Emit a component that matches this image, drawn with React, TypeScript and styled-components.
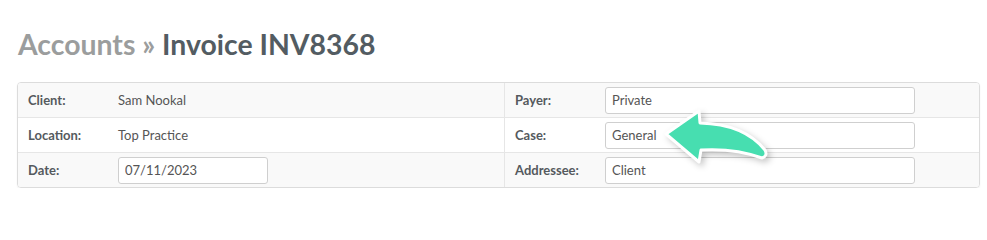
import * as React from "react"
import styled, { createGlobalStyle } from "styled-components"

const GlobalStyle = createGlobalStyle`
  body {
    margin: 0;
    background: #fff;
    font-family: Lato, "Liberation Sans", sans-serif;
  }
`

const Page = styled.div`
  position: relative;
  padding: 26px 7px 0 17px;
`

const Title = styled.h1`
  margin: 0 0 20px 1px;
  font-size: 28.4px;
  font-weight: 700;
  line-height: 36px;
  color: #535c62;
`

const Crumb = styled.span`
  color: #9b9d9d;
`

const Panel = styled.div`
  border: 1px solid #dcdcdc;
  border-radius: 4px;
  box-shadow: 0 1px 2px rgb(0 0 0 / 6%);
  overflow: hidden;
`

const Row = styled.div<{ $shaded?: boolean }>`
  display: grid;
  grid-template-columns: 90px 396px 91px 1fr;
  height: 34px;
  background: ${(p) => (p.$shaded ? "#f9f9f9" : "#fff")};
  & + & {
    border-top: 1px solid #e6e6e6;
  }
`

const Cell = styled.div<{ $divider?: boolean }>`
  display: flex;
  align-items: center;
  padding: 0 10px;
  font-size: 13px;
  color: #555;
  border-left: ${(p) => (p.$divider ? "1px solid #e6e6e6" : "none")};
`

const Label = styled(Cell)`
  font-weight: 700;
  color: #555a5e;
`

const Field = styled.input<{ $width: number }>`
  box-sizing: border-box;
  width: ${(p) => p.$width}px;
  height: 27px;
  padding: 0 6px;
  border: 1px solid #cfcfcf;
  border-radius: 3px;
  background: #fff;
  font-family: Lato, "Liberation Sans", sans-serif;
  font-size: 13px;
  color: #555;
  outline: none;
`

const Arrow = styled.svg`
  position: absolute;
  left: 660px;
  top: 105px;
  overflow: visible;
  filter: drop-shadow(3px 3px 3px rgb(0 0 0 / 22%));
`

const rows = [
  { label: "Client:", value: "Sam Nookal", right: "Payer:", field: "Private" },
  { label: "Location:", value: "Top Practice", right: "Case:", field: "General" },
  { label: "Date:", date: "07/11/2023", right: "Addressee:", field: "Client" },
]

const App = () => {
  return (
    <>
      <GlobalStyle />
      <Page>
        <Title>
          <Crumb>Accounts »</Crumb> Invoice INV8368
        </Title>
        <Panel>
          {rows.map((r, i) => (
            <Row key={r.right} $shaded={i !== 1}>
              <Label>{r.label}</Label>
              <Cell>
                {r.date ? <Field $width={150} value={r.date} readOnly /> : r.value}
              </Cell>
              <Label $divider>{r.right}</Label>
              <Cell>
                <Field $width={310} value={r.field} readOnly />
              </Cell>
            </Row>
          ))}
        </Panel>
        <Arrow width="115" height="65" viewBox="0 0 115 65">
          <path
            d="M6,29 L39,6 L40,18 Q84,19 105,45 Q108,51 102,53 Q75,43 41,45 L39,57 Z"
            fill="#47deb0"
            stroke="#fff"
            strokeWidth="3"
            strokeLinejoin="round"
          />
        </Arrow>
      </Page>
    </>
  )
}

export default App
